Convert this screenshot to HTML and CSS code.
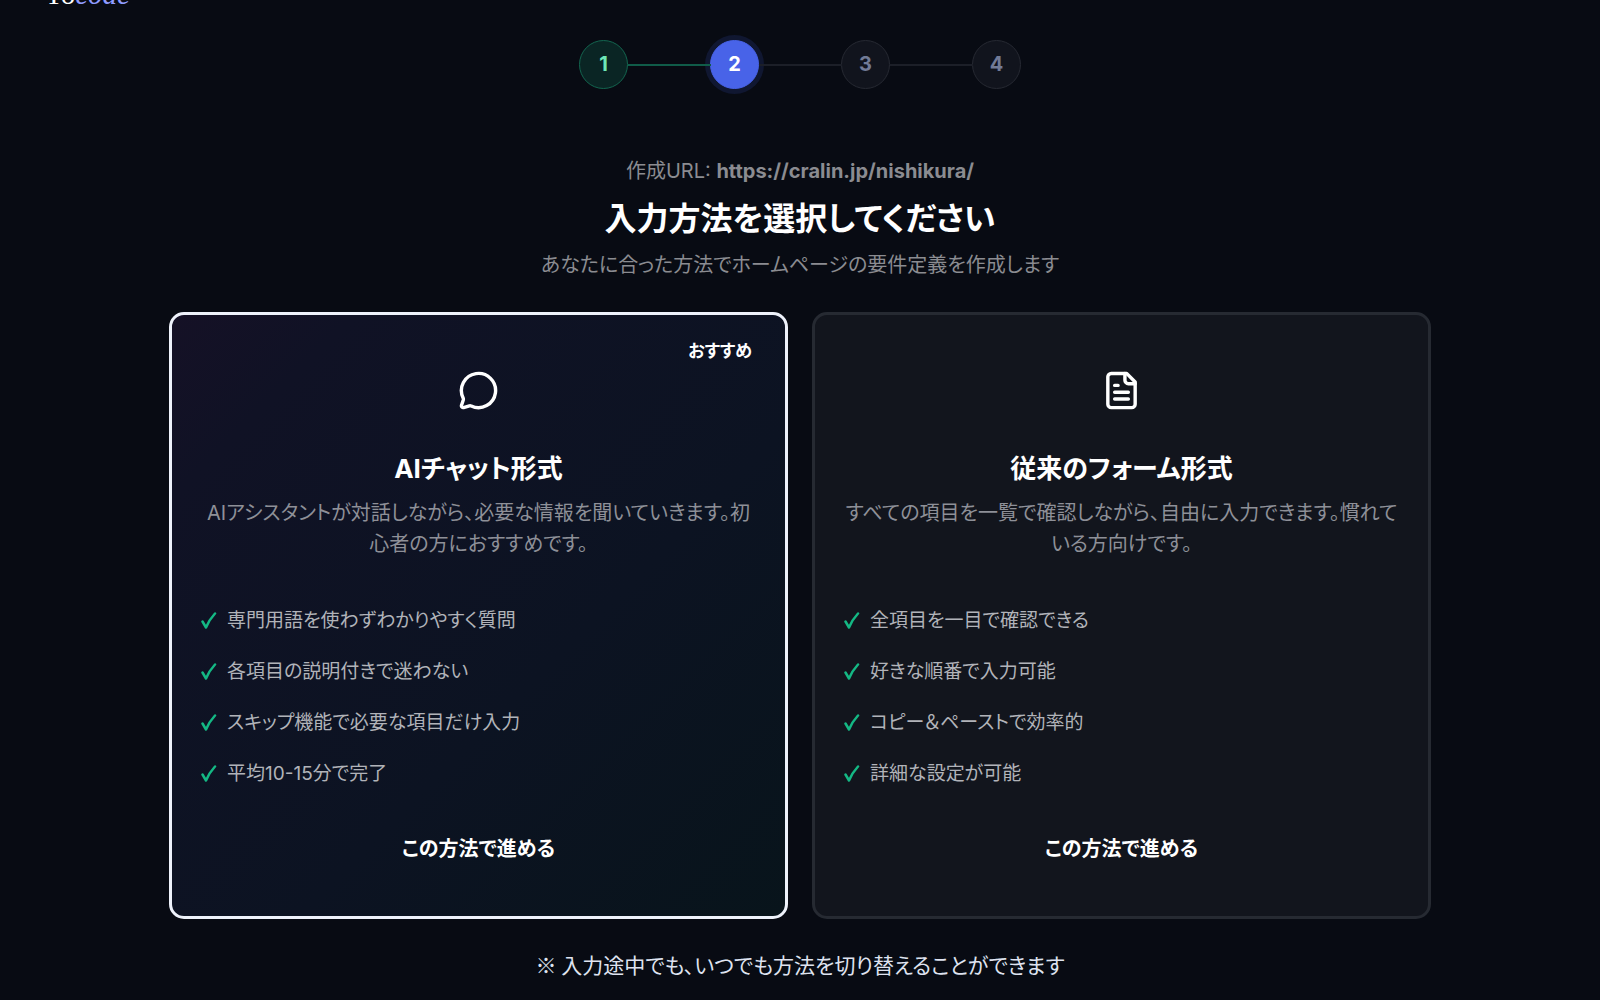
FILE: index.html
```html
<!DOCTYPE html>
<html lang="ja">
<head>
    <meta charset="UTF-8">
    <meta name="viewport" content="width=device-width, initial-scale=1.0">
    <title>入力方法の選択 - Tocode</title>
    <link rel="stylesheet" href="styles.css">
</head>
<body>
    <header class="site-header">
        <a href="#" class="logo">To<em>code</em></a>
    </header>

    <main class="container">
        <!-- ステップ表示 -->
        <ol class="steps">
            <li class="step done">1</li>
            <li class="step active">2</li>
            <li class="step">3</li>
            <li class="step">4</li>
        </ol>

        <div class="page-head">
            <p class="site-url">作成URL: <strong>https://cralin.jp/nishikura/</strong></p>
            <h1>入力方法を選択してください</h1>
            <p class="lead">あなたに合った方法でホームページの要件定義を作成します</p>
        </div>

        <div class="methods">
            <!-- AIチャット -->
            <section class="card recommended">
                <span class="badge">おすすめ</span>
                <svg class="card-icon" viewBox="0 0 24 24" aria-hidden="true">
                    <path d="M2.992 16.342a2 2 0 0 1 .094 1.167l-1.065 3.29a1 1 0 0 0 1.236 1.168l3.413-.998a2 2 0 0 1 1.099.092 10 10 0 1 0-4.777-4.719"/>
                </svg>
                <h2>AIチャット形式</h2>
                <p class="desc">AIアシスタントが対話しながら、必要な情報を聞いていきます。初心者の方におすすめです。</p>
                <ul class="features">
                    <li><svg class="check" viewBox="0 0 16 18" aria-hidden="true"><path d="M1.5 9.5L5 15.5Q8 8 14 1.5"/></svg>専門用語を使わずわかりやすく質問</li>
                    <li><svg class="check" viewBox="0 0 16 18" aria-hidden="true"><path d="M1.5 9.5L5 15.5Q8 8 14 1.5"/></svg>各項目の説明付きで迷わない</li>
                    <li><svg class="check" viewBox="0 0 16 18" aria-hidden="true"><path d="M1.5 9.5L5 15.5Q8 8 14 1.5"/></svg>スキップ機能で必要な項目だけ入力</li>
                    <li><svg class="check" viewBox="0 0 16 18" aria-hidden="true"><path d="M1.5 9.5L5 15.5Q8 8 14 1.5"/></svg>平均10-15分で完了</li>
                </ul>
                <button type="button" class="select-btn">この方法で進める</button>
            </section>

            <!-- フォーム -->
            <section class="card">
                <svg class="card-icon" viewBox="0 0 24 24" aria-hidden="true">
                    <path d="M15 2H6a2 2 0 0 0-2 2v16a2 2 0 0 0 2 2h12a2 2 0 0 0 2-2V7Z"/>
                    <path d="M14 2v4a2 2 0 0 0 2 2h4"/>
                    <path d="M10 9H8M16 13H8M16 17H8"/>
                </svg>
                <h2>従来のフォーム形式</h2>
                <p class="desc">すべての項目を一覧で確認しながら、自由に入力できます。慣れている方向けです。</p>
                <ul class="features">
                    <li><svg class="check" viewBox="0 0 16 18" aria-hidden="true"><path d="M1.5 9.5L5 15.5Q8 8 14 1.5"/></svg>全項目を一目で確認できる</li>
                    <li><svg class="check" viewBox="0 0 16 18" aria-hidden="true"><path d="M1.5 9.5L5 15.5Q8 8 14 1.5"/></svg>好きな順番で入力可能</li>
                    <li><svg class="check" viewBox="0 0 16 18" aria-hidden="true"><path d="M1.5 9.5L5 15.5Q8 8 14 1.5"/></svg>コピー＆ペーストで効率的</li>
                    <li><svg class="check" viewBox="0 0 16 18" aria-hidden="true"><path d="M1.5 9.5L5 15.5Q8 8 14 1.5"/></svg>詳細な設定が可能</li>
                </ul>
                <button type="button" class="select-btn">この方法で進める</button>
            </section>
        </div>

        <p class="note">※ 入力途中でも、いつでも方法を切り替えることができます</p>
    </main>
</body>
</html>
```
FILE: styles.css
```css
* {
    box-sizing: border-box;
    margin: 0;
    padding: 0;
}

body {
    background-color: #080b13;
    color: #fff;
    font-family: Inter, "Noto Sans CJK JP", sans-serif;
    font-feature-settings: "palt";
    font-size: 20px;
    line-height: 31px;
    overflow: hidden;
}

/* ヘッダーは上にスクロールした位置 */
.site-header {
    margin-top: -22px;
    padding: 0 45px;
    height: 30px;
}

.logo {
    color: #fff;
    font-family: "Liberation Serif", serif;
    font-size: 29px;
    line-height: 32px;
    text-decoration: none;
}

.logo em {
    color: #8f9bff;
}

.container {
    max-width: 1310px;
    margin: 0 auto;
    padding: 32px 24px 0;
}

/* ステップ */
.steps {
    display: flex;
    justify-content: center;
    gap: 82px;
    list-style: none;
    margin-bottom: 67px;
}

.step {
    position: relative;
    display: flex;
    align-items: center;
    justify-content: center;
    width: 49px;
    height: 49px;
    border: 1px solid #262932;
    border-radius: 50%;
    background-color: #11141d;
    color: #717b96;
    font-weight: 700;
}

.step + .step::before {
    content: "";
    position: absolute;
    right: 100%;
    top: 23px;
    width: 83px;
    height: 2px;
    background-color: #1c1f28;
}

.step.done {
    border-color: #13654f;
    background-color: #0a2524;
    color: #6ee7b7;
}

.step.active {
    border-color: #4863e8;
    background-color: #4863e8;
    box-shadow: 0 0 0 5px #101731;
    color: #fff;
}

.step.done + .step::before {
    background-color: #105c49;
}

/* 見出し */
.page-head {
    text-align: center;
    margin-bottom: 31px;
}

.site-url,
.lead {
    color: #8b8c91;
}

.site-url strong {
    font-weight: 700;
}

h1 {
    font-size: 32px;
    font-weight: 700;
    line-height: 48px;
    margin: 8px 0 7px;
}

/* 選択カード */
.methods {
    display: grid;
    grid-template-columns: 1fr 1fr;
    gap: 24px;
}

.card {
    position: relative;
    display: flex;
    flex-direction: column;
    align-items: center;
    padding: 55px 29px 51px;
    border: 3px solid #262a32;
    border-radius: 15px;
    background-color: #12151d;
    text-align: center;
}

.card.recommended {
    border-color: #eef2fb;
    background: linear-gradient(135deg, #151126 0%, #101225 15%, #0c1322 60%, #08141b 100%);
}

.badge {
    position: absolute;
    top: 21px;
    right: 33px;
    font-size: 17px;
    font-weight: 700;
}

.card-icon {
    width: 41px;
    height: 41px;
    fill: none;
    stroke: #fff;
    stroke-width: 2;
    stroke-linecap: round;
    stroke-linejoin: round;
}

h2 {
    font-size: 26px;
    font-weight: 700;
    line-height: 40px;
    margin: 38px 0 9px;
}

.desc {
    color: #8e9098;
}

.features {
    align-self: stretch;
    margin: 35px 0;
    list-style: none;
    text-align: left;
}

.features li {
    display: flex;
    align-items: center;
    gap: 10px;
    padding: 10px 0;
    color: #b1b3b9;
    font-size: 19px;
}

.check {
    width: 16px;
    height: 18px;
    fill: none;
    stroke: #14b884;
    stroke-width: 2.5;
    stroke-linecap: round;
    stroke-linejoin: round;
}

.select-btn {
    border: none;
    background: none;
    color: #fff;
    font: inherit;
    font-feature-settings: inherit;
    font-weight: 700;
    cursor: pointer;
}

.note {
    margin-top: 30px;
    color: #dfe3f0;
    font-family: "Noto Sans CJK JP", sans-serif;
    font-size: 21px;
    text-align: center;
}
```
